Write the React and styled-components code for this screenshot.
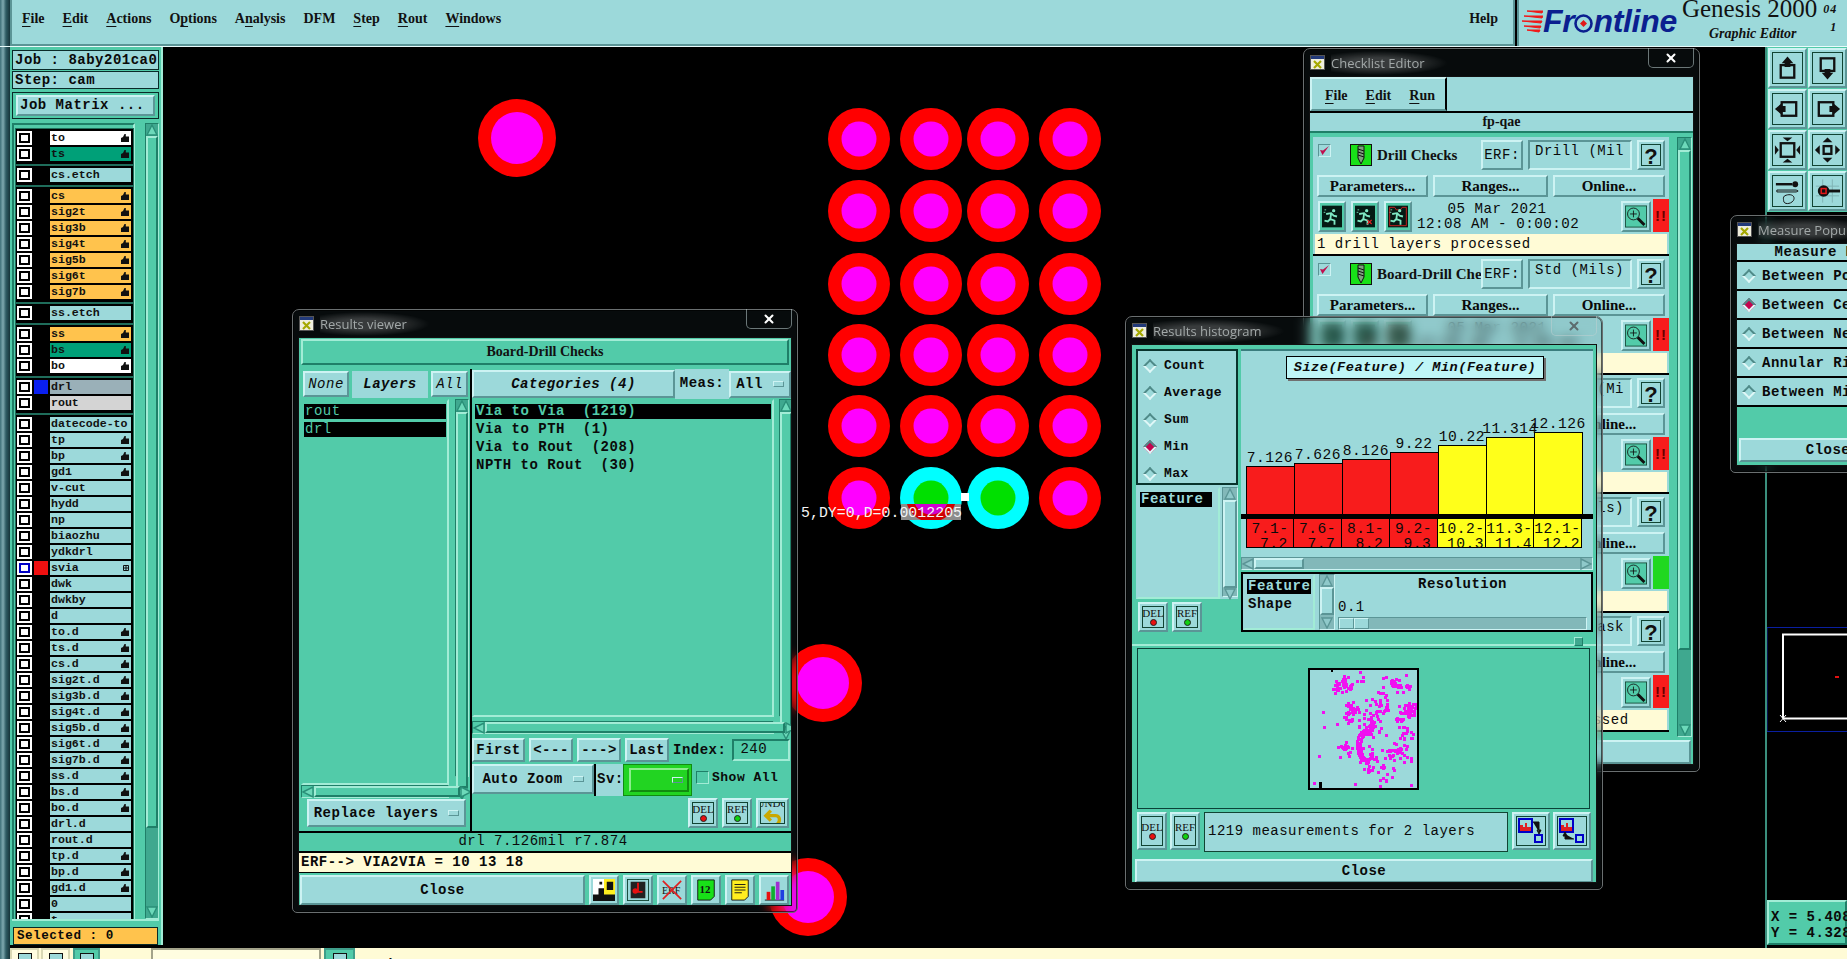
import React from "react";
import styled, { createGlobalStyle, css } from "styled-components";
import { X } from "lucide-react";

const TEAL = "#9cd9da";
const GREEN = "#52cba9";
const ORANGE = "#ffc34d";
const CREAM = "#fffbd6";
const MONO = `"Liberation Mono", "DejaVu Sans Mono", monospace`;
const SERIF = `"Liberation Serif", serif`;

const raised = css`
  border: 2px solid;
  border-color: #cdf3f3 #5b9596 #5b9596 #cdf3f3;
`;
const sunken = css`
  border: 2px solid;
  border-color: #5b9596 #cdf3f3 #cdf3f3 #5b9596;
`;
const greenRaised = css`
  border: 2px solid;
  border-color: #a2ecd6 #1f7f68 #1f7f68 #a2ecd6;
`;
const greenSunken = css`
  border: 2px solid;
  border-color: #1f7f68 #a2ecd6 #a2ecd6 #1f7f68;
`;
const monoText = css`
  font-family: ${MONO};
  font-size: 14px;
  letter-spacing: 0.5px;
  color: #0a0a0a;
`;

const GlobalStyle = createGlobalStyle`
  * { box-sizing: border-box; }
  html, body { margin: 0; padding: 0; background: #000; overflow: hidden; }
`;

const Screen = styled.div`
  position: relative;
  width: 1847px;
  height: 959px;
  overflow: hidden;
  background: #000;
  display: flex;
  flex-direction: column;
`;

/* ---------- top bar ---------- */
const TopBar = styled.div`
  height: 47px;
  display: flex;
  flex-shrink: 0;
  border-bottom: 1px solid #e8fbfb;
`;
const Rail = styled.div`
  width: 10px;
  flex-shrink: 0;
  background: linear-gradient(90deg, #3d6f78, #7fa9b0 30%, #2f5c64 60%, #17343a);
`;
const MenuPanel = styled.div`
  flex: 1;
  display: flex;
  align-items: flex-start;
  gap: 18px;
  padding: 11px 15px 0 10px;
  background: ${TEAL};
  border-bottom: 2px solid #5b9596;
  border-left: 2px solid #5b9596;
  border-right: 2px solid #5b9596;
`;
const MenuItem = styled.span`
  font: bold 14px ${SERIF};
  color: #111;
  line-height: 16px;
  margin-left: ${(p) => (p.$push ? "auto" : 0)};
  u {
    text-underline-offset: 3px;
  }
`;
const LogoPanel = styled.div`
  width: 330px;
  margin-left: 2px;
  position: relative;
  display: flex;
  background: ${TEAL};
  border-left: 2px solid #5b9596;
  overflow: hidden;
`;
const LogoMark = styled.div`
  display: flex;
  align-items: center;
  margin: 0 0 4px 2px;
  font: italic bold 32px "Liberation Sans", sans-serif;
  color: #0b1f8f;
  letter-spacing: -0.3px;
`;
const GenesisCol = styled.div`
  margin-left: 5px;
  display: flex;
  flex-direction: column;
  align-items: center;
`;
const GenesisTitle = styled.div`
  font: 25px/25px ${SERIF};
  color: #111;
  margin-top: -4px;
`;
const GenesisSub = styled.div`
  font: italic bold 14px/16px ${SERIF};
  color: #111;
  margin-top: 5px;
  margin-left: 6px;
`;
const Version = styled.div`
  margin-left: 6px;
  font: italic bold 12px/18px ${SERIF};
  color: #111;
  text-align: right;
  letter-spacing: 1px;
`;

/* ---------- middle ---------- */
const Middle = styled.div`
  flex: 1;
  display: flex;
  min-height: 0;
`;
const LeftCol = styled.div`
  width: 153px;
  height: 898px;
  flex-shrink: 0;
  background: ${GREEN};
  border-right: 2px solid #a2ecd6;
  display: flex;
  flex-direction: column;
  padding: 3px 2px 0 2px;
`;
const InfoBox = styled.div`
  border: 1px solid #0a2a28;
  background: ${TEAL};
  height: ${(p) => p.$h}px;
  padding-left: 2px;
  ${monoText};
  font-weight: bold;
  line-height: ${(p) => p.$h - 2}px;
  white-space: nowrap;
  overflow: hidden;
  margin-bottom: 1px;
`;
const MatrixFrame = styled.div`
  margin-top: 2px;
  height: 27px;
  border: 1px solid #0a2a28;
  padding: 2px 3px;
`;
const MatrixButton = styled.div`
  height: 21px;
  ${raised};
  background: ${TEAL};
  ${monoText};
  font-weight: bold;
  line-height: 17px;
  padding-left: 2px;
`;
const LayerArea = styled.div`
  margin-top: 4px;
  height: 796px;
  display: flex;
  overflow: hidden;
`;
const LayerList = styled.div`
  width: 123px;
  padding: 4px 0 0 2px;
  border: 2px solid;
  border-color: #1f7f68 #a2ecd6 transparent #1f7f68;
  border-bottom: 0;
  display: flex;
  flex-direction: column;
  gap: 2px;
`;
const LayerGroup = styled.div`
  width: 117px;
  background: #000;
  padding: 2px 0 1px 1px;
  outline: 1px solid #1f6d5b;
  flex-shrink: 0;
`;
const LayerRow = styled.div`
  display: flex;
  height: 16px;
  align-items: flex-start;
`;
const LayerCheck = styled.div`
  width: 15px;
  height: 14px;
  background: #fff;
  display: flex;
  align-items: center;
  justify-content: center;
  &::after {
    content: "";
    width: 7px;
    height: 6px;
    background: #fff;
    outline: 2px solid ${(p) => (p.$active ? "#0000c8" : "#000")};
  }
`;
const Swatch = styled.div`
  width: 14px;
  height: 14px;
  margin: 0 2px 0 2px;
  background: ${(p) => p.$color || "#000"};
`;
const LayerLabel = styled.div`
  width: 81px;
  height: 14px;
  padding: 0 1px;
  background: ${(p) => p.$bg};
  font: bold 11.6px/14px ${MONO};
  color: #111;
  display: flex;
  justify-content: space-between;
  align-items: center;
  white-space: nowrap;
  overflow: hidden;
`;
const SelectedWrap = styled.div`
  flex: 1;
  padding: 6px 1px 0;
  border-top: 2px solid #a2ecd6;
`;
const SelectedBar = styled.div`
  height: 18px;
  background: ${ORANGE};
  border: 1px solid #0a2a28;
  ${monoText};
  font-size: 12.6px;
  font-weight: bold;
  line-height: 16px;
  padding-left: 3px;
`;
const Canvas = styled.div`
  flex: 1;
  min-width: 0;
  background: #000;
`;
const Board = styled.svg`
  display: block;
  width: 100%;
  height: 100%;
`;
const RightCol = styled.div`
  width: 82px;
  flex-shrink: 0;
  border-left: 2px solid #3b8f7d;
  display: flex;
  flex-direction: column;
  background: #000;
`;
const ToolGrid = styled.div`
  height: 165px;
  background: ${GREEN};
  display: grid;
  grid-template-columns: 1fr 1fr;
  grid-auto-rows: 40px;
  gap: 1px;
  padding: 1px 0 0 1px;
`;
const ToolButton = styled.div`
  ${raised};
  background: ${TEAL};
  padding: 2px;
  svg {
    display: block;
    width: 100%;
    height: 100%;
    border: 1px solid #143;
  }
`;
const Navigator = styled.svg`
  flex: 1;
  display: block;
  width: 100%;
  min-height: 0;
`;
const XYBox = styled.div`
  height: 45px;
  margin-bottom: 3px;
  background: ${GREEN};
  ${greenRaised};
  ${monoText};
  font-weight: bold;
  line-height: 16px;
  padding: 7px 0 0 2px;
  white-space: pre;
`;

/* ---------- bottom bar ---------- */
const BottomBar = styled.div`
  height: 11px;
  display: flex;
  background: ${CREAM};
  flex-shrink: 0;
`;
const BottomBtn = styled.div`
  width: ${(p) => p.$w}px;
  margin-right: ${(p) => p.$gap || 0}px;
  background: ${(p) => (p.$green ? GREEN : "#fffde0")};
  border: 2px solid ${(p) => (p.$green ? "#3f9e8a" : "#d9d8b4")};
  border-bottom: 0;
  display: flex;
  justify-content: center;
  span {
    width: 14px;
    height: 9px;
    margin-top: 3px;
    border: 1px solid #111;
    border-bottom: 0;
    background: ${TEAL};
  }
`;
const BottomField = styled.div`
  width: 170px;
  margin-right: 3px;
  background: #fffde0;
  border: 2px solid #a3a38a;
  border-bottom: 0;
`;
const BottomStatus = styled.div`
  flex: 1;
  overflow: hidden;
  padding: 9px 0 0 22px;
  ${monoText};
  font-weight: bold;
  line-height: 16px;
  white-space: nowrap;
`;

/* ---------- windows ---------- */
const Win = styled.div`
  position: absolute;
  left: ${(p) => p.$x}px;
  top: ${(p) => p.$y}px;
  width: ${(p) => p.$w}px;
  height: ${(p) => p.$h}px;
  z-index: ${(p) => p.$z};
  border: 1px solid #6a6f70;
  border-radius: 7px 7px 5px 5px;
  background: rgba(60, 90, 95, 0.12);
  backdrop-filter: blur(6px);
  padding: 0 5px 6px;
  display: flex;
  flex-direction: column;
  box-shadow: inset 0 0 0 1px rgba(0, 0, 0, 0.6);
`;
const TitleBar = styled.div`
  position: relative;
  height: 27px;
  flex-shrink: 0;
  display: flex;
  align-items: center;
  gap: 6px;
  padding-left: 1px;
`;
const TitleText = styled.span`
  font: 13px "Open Sans", sans-serif;
  color: #a2a8a8;
  padding: 3px 22px 3px 0;
  background: radial-gradient(ellipse at 40% 50%, rgba(255, 255, 255, 0.2) 30%, rgba(255, 255, 255, 0) 72%);
  white-space: nowrap;
`;
const TitleIcon = styled.svg`
  width: 15px;
  height: 15px;
  flex-shrink: 0;
`;
const CloseTab = styled.div`
  position: absolute;
  right: 0;
  top: -1px;
  width: 46px;
  height: 20px;
  border: 1px solid rgba(190, 210, 210, 0.55);
  border-top: 0;
  border-radius: 0 0 5px 5px;
  display: flex;
  align-items: center;
  justify-content: center;
  color: ${(p) => (p.$dim ? "#5d6c6e" : "#fff")};
`;
const Body = styled.div`
  flex: 1;
  min-height: 0;
  background: ${GREEN};
  display: flex;
  flex-direction: column;
  border: 1px solid #111;
  overflow: hidden;
`;

const Btn = styled.div`
  ${raised};
  ${monoText};
  font-weight: ${(p) => (p.$thin ? "normal" : "bold")};
  font-style: ${(p) => (p.$italic ? "italic" : "normal")};
  background: ${TEAL};
  width: ${(p) => (p.$w ? `${p.$w}px` : "auto")};
  height: ${(p) => p.$h || 24}px;
  flex: ${(p) => (p.$w ? "0 0 auto" : 1)};
  display: flex;
  align-items: center;
  justify-content: center;
  gap: 10px;
  white-space: nowrap;
  overflow: hidden;
`;
const SerifBtn = styled(Btn)`
  font: bold 15px ${SERIF};
  letter-spacing: 0;
`;
const Notch = styled.i`
  display: block;
  width: 11px;
  height: 6px;
  ${raised};
  border-width: 1px;
  background: ${(p) => p.$bg || TEAL};
  flex-shrink: 0;
`;
const ListBox = styled.div`
  width: ${(p) => p.$w}px;
  height: ${(p) => p.$h}px;
  ${greenSunken};
  border-color: transparent #a2ecd6 #a2ecd6 transparent;
  padding: ${(p) => p.$pad || "3px 2px"};
  background: ${(p) => p.$bg || GREEN};
  flex-shrink: 0;
`;
const ListItem = styled.div`
  ${monoText};
  font-weight: ${(p) => (p.$bold ? "bold" : "normal")};
  height: 15px;
  line-height: 15px;
  margin-bottom: 3px;
  padding-left: 1px;
  white-space: pre;
  background: ${(p) => (p.$on ? "#000" : "transparent")};
  color: ${(p) => (p.$on ? p.$fg || GREEN : "#0a0a0a")};
  width: ${(p) => (p.$w ? `${p.$w}px` : "auto")};
`;
const NavLabel = styled.span`
  ${monoText};
  font-weight: bold;
  white-space: pre;
`;

const ScrollV = styled.div`
  width: ${(p) => p.$w || 14}px;
  height: ${(p) => p.$h}px;
  margin-left: ${(p) => p.$ml || 0}px;
  flex-shrink: 0;
  display: flex;
  flex-direction: column;
  background: ${(p) => (p.$teal ? "#82b8b9" : "#3fa88f")};
  ${(p) => (p.$teal ? sunken : greenSunken)};
  border-width: 1px;
`;
const ScrollH = styled.div`
  width: ${(p) => (p.$w ? `${p.$w}px` : "100%")};
  height: 13px;
  margin-left: ${(p) => p.$ml || 0}px;
  flex-shrink: 0;
  display: flex;
  align-items: center;
  background: ${(p) => (p.$dark ? "#82b8b9" : GREEN)};
  ${(p) => (p.$dark ? sunken : greenSunken)};
  border-width: 1px;
`;
const Thumb = styled.div`
  background: ${(p) => (p.$teal ? TEAL : GREEN)};
  ${(p) => (p.$teal ? raised : greenRaised)};
  flex: 0 0 ${(p) => p.$size};
  margin-left: ${(p) => p.$off || 0}px;
  ${(p) => p.$horizontal && "height: 11px;"}
`;
const Gap = styled.div`
  flex: 1;
`;

const Arrow = ({ dir, teal }) => {
  const pts = { up: "6,1 11,11 1,11", down: "1,1 11,1 6,11", left: "1,6 11,1 11,11", right: "1,1 11,6 1,11" }[dir];
  return (
    <svg width="12" height="12" viewBox="0 0 12 12" style={{ flexShrink: 0, display: "block", margin: "0 auto" }}>
      <polygon points={pts} fill={teal ? "#8fc9ca" : "#6dd9ba"} stroke={teal ? "#5b9596" : "#2a8f78"} strokeWidth="1.4" />
    </svg>
  );
};

const VScroll = ({ h, w, ml, thumb = "100%", teal }) => (
  <ScrollV $h={h} $w={w} $ml={ml} $teal={teal}>
    <Arrow dir="up" teal={teal} />
    <Thumb $size={thumb} $teal={teal} />
    <Gap />
    <Arrow dir="down" teal={teal} />
  </ScrollV>
);
const HScroll = ({ w, ml, thumb = "100%", dark }) => (
  <ScrollH $w={w} $ml={ml} $dark={dark}>
    <Arrow dir="left" teal={dark} />
    <Thumb $size={thumb} $teal={dark} $horizontal />
    <Gap />
    <Arrow dir="right" teal={dark} />
  </ScrollH>
);

const IconBtn = styled.div`
  ${raised};
  background: ${(p) => p.$bg || TEAL};
  width: ${(p) => p.$w || 30}px;
  height: ${(p) => p.$h || 30}px;
  flex-shrink: 0;
  padding: 2px;
  display: flex;
  svg {
    display: block;
    width: 100%;
    height: 100%;
  }
`;
const GlyphBox = styled.div`
  flex: 1;
  border: 1px solid #143;
  display: flex;
  flex-direction: column;
  align-items: center;
  justify-content: center;
  gap: 1px;
  font: 11px/10px ${SERIF};
  color: #111;
  overflow: hidden;
`;
const GlyphDot = styled.i`
  display: block;
  width: 7px;
  height: 7px;
  border-radius: 50%;
  background: ${(p) => p.$c};
  border: 1px solid #222;
`;
const DotButton = ({ label, color, h = 30 }) => (
  <IconBtn $h={h}>
    <GlyphBox>
      {label}
      <GlyphDot $c={color} />
    </GlyphBox>
  </IconBtn>
);

/* ---------- small drawings ---------- */
const WinGlyph = () => (
  <TitleIcon viewBox="0 0 15 15">
    <rect x="0.5" y="0.5" width="14" height="14" fill="#efeedd" stroke="#555" />
    <rect x="1" y="1" width="13" height="3" fill="#223a7a" />
    <path d="M4 6 L11 13 M11 6 L4 13" stroke="#a5a800" strokeWidth="2.2" />
  </TitleIcon>
);
const Hand = () => (
  <svg width="8" height="8" viewBox="0 0 8 8" style={{ marginRight: 1, flexShrink: 0 }}>
    <path d="M0 8 L0 4 L2 3 L3.5 0 L4.8 0 L4.8 2.4 L8 2.4 L8 8 Z" fill="#111" />
  </svg>
);
const GridFlag = () => (
  <svg width="6" height="6" viewBox="0 0 6 6" style={{ marginRight: 1, flexShrink: 0 }}>
    <path d="M.5 .5 H5.5 V5.5 H.5 Z M3 .5 V5.5 M.5 3 H5.5" fill="none" stroke="#111" />
  </svg>
);
const DrillIcon = () => (
  <svg width="22" height="22" viewBox="0 0 22 22" style={{ flexShrink: 0 }}>
    <rect x="0.5" y="0.5" width="21" height="21" fill="#18e018" stroke="#111" />
    <path d="M8 2 H14 V14 L11 20 L8 14 Z" fill="#7ea07e" stroke="#111" />
    <path d="M8 5 L14 7 M8 8 L14 10 M8 11 L14 13" stroke="#111" />
  </svg>
);
const RedCheck = () => (
  <svg viewBox="0 0 11 11" width="11" height="11">
    <path d="M1 5 L3.5 10 L10 1 L4 5.5 Z" fill="#c0104f" />
  </svg>
);
const Runner = ({ variant }) => (
  <svg viewBox="0 0 24 26">
    <rect width="24" height="26" fill="#041a14" />
    {variant === 2 && <path d="M2 2 H8 L10 5 H15 L17 2 H22 V24 H2 Z" fill="none" stroke="#e02020" />}
    <circle cx="14" cy="6" r="2" fill="#7fe8c4" />
    <path d="M5 10 L11 9 L14 12 L18 13 M11 9 L10 16 L15 18 L15 23 M10 16 L7 19 L3 18" fill="none" stroke="#7fe8c4" strokeWidth="2.2" />
    {variant === 1 && <path d="M15 17 L20 22 M20 17 L15 22" stroke="#e02020" strokeWidth="1.5" />}
    <path d="M3 5 H5 M2 8 H4" stroke="#7fe8c4" />
  </svg>
);
const Loupe = () => (
  <svg viewBox="0 0 26 26">
    <rect x="0.5" y="0.5" width="25" height="25" fill="#52cba9" stroke="#143" />
    <circle cx="10" cy="10" r="7" fill="none" stroke="#111" />
    <path d="M10 6 V14 M6 10 H14" stroke="#111" />
    <path d="M15 15 L23 23" stroke="#111" strokeWidth="3.5" />
  </svg>
);
const Question = styled.span`
  flex: 1;
  border: 1px solid #143;
  font: bold 22px/24px "Liberation Sans", sans-serif;
  color: #111;
  text-align: center;
`;
const ToolIcon = ({ children }) => (
  <ToolButton>
    <svg viewBox="0 0 30 30" fill="none" stroke="#111" strokeWidth="2.4">
      {children}
    </svg>
  </ToolButton>
);
const T = ({ d }) => <path d={d} fill="#111" stroke="none" />;

const CompareIcon = ({ back }) => (
  <svg viewBox="0 0 30 30">
    <rect x="0.5" y="0.5" width="29" height="29" fill="none" stroke="#143" />
    <rect x="3" y="3" width="13" height="13" fill="#9cd9da" stroke="#0000c8" strokeWidth="2" />
    <path d="M4 15 V9 H7 V11 H9 V7 H11 V11 H15 V15 Z" fill="#e02020" />
    <rect x="19" y="19" width="7" height="7" fill="none" stroke="#0000c8" strokeWidth="2" />
    {back ? (
      <path d="M17 23 H8 V18 M6 20 L8 16 L10 20 Z" fill="#111" stroke="#111" />
    ) : (
      <path d="M17 6 H23 V16 M21 14 L23 18 L25 14 Z" fill="#111" stroke="#111" />
    )}
  </svg>
);

/* ---------- data ---------- */
const rows = (bg, hand, ...names) => names.map((n) => ({ n, bg, hand }));
const layerGroups = [
  [{ n: "to", bg: "#fff", hand: true }, { n: "ts", bg: "#00a078", hand: true }],
  [{ n: "cs.etch", bg: TEAL }],
  rows(ORANGE, true, "cs", "sig2t", "sig3b", "sig4t", "sig5b", "sig6t", "sig7b"),
  [{ n: "ss.etch", bg: TEAL }],
  [{ n: "ss", bg: ORANGE, hand: true }, { n: "bs", bg: "#00a078", hand: true }, { n: "bo", bg: "#fff", hand: true }],
  [
    { n: "drl", bg: "#9ab0b8", swatch: "#0a1ff0" },
    { n: "rout", bg: "#d4d4d4" },
  ],
  [
    ...rows(TEAL, false, "datecode-to"),
    ...rows(TEAL, true, "tp", "bp", "gd1"),
    ...rows(TEAL, false, "v-cut", "hydd", "np", "biaozhu", "ydkdrl"),
    { n: "svia", bg: TEAL, grid: true, swatch: "#f01010", active: true },
    ...rows(TEAL, false, "dwk", "dwkby", "d"),
    ...rows(TEAL, true, "to.d", "ts.d", "cs.d", "sig2t.d", "sig3b.d", "sig4t.d", "sig5b.d", "sig6t.d", "sig7b.d", "ss.d", "bs.d", "bo.d"),
    ...rows(TEAL, false, "drl.d", "rout.d"),
    ...rows(TEAL, true, "tp.d", "bp.d", "gd1.d"),
    ...rows(TEAL, false, "0", "t"),
  ],
];

const bars = [
  { v: "7.126", h: 48, c: "#f81c1c", r: ["7.1-", "7.2"] },
  { v: "7.626", h: 51, c: "#f81c1c", r: ["7.6-", "7.7"] },
  { v: "8.126", h: 55, c: "#f81c1c", r: ["8.1-", "8.2"] },
  { v: "9.22", h: 62, c: "#f81c1c", r: ["9.2-", "9.3"] },
  { v: "10.22", h: 69, c: "#ffff1a", r: ["10.2-", "10.3"] },
  { v: "11.314", h: 77, c: "#ffff1a", r: ["11.3-", "11.4"] },
  { v: "12.126", h: 82, c: "#ffff1a", r: ["12.1-", "12.2"] },
];

const checks = [
  { name: "Drill Checks", input: "Drill (Mil", msg: "1 drill layers processed", status: "#f81c1c" },
  { name: "Board-Drill Checks", input: "Std (Mils)", msg: "1 drill layers processed", status: "#f81c1c" },
  { name: "Signal Checks", input: "Signal (Mi", msg: "", status: "#f81c1c" },
  { name: "Power Checks", input: "Std (Mils)", msg: "", status: "#20d820", clear: true },
  { name: "Mask Checks", input: "Paste Mask", msg: "2 solder mask layers were processed", status: "#f81c1c" },
];

const padColumns = [859, 931, 998, 1070];
const padRows = [139, 211, 284, 355, 426, 498];

const mapDots = (() => {
  let seed = 17;
  const rnd = () => {
    seed = (seed * 16807) % 2147483647;
    return seed / 2147483647;
  };
  const clusters = [
    [33, 13, 9, 40], [24, 18, 5, 8], [86, 14, 9, 24], [50, 8, 7, 6], [98, 16, 5, 6],
    [69, 32, 11, 24], [41, 38, 8, 30], [99, 38, 7, 34], [59, 54, 13, 28], [90, 50, 8, 10],
    [40, 50, 11, 14], [33, 76, 7, 14], [88, 80, 12, 26], [57, 90, 9, 12], [72, 95, 11, 10],
    [75, 108, 11, 6], [93, 62, 10, 8],
  ];
  const dots = [];
  clusters.forEach(([cx, cy, r, n]) => {
    for (let i = 0; i < n; i += 1) {
      const a = rnd() * Math.PI * 2;
      const d = rnd() * r;
      dots.push([cx + Math.cos(a) * d, cy + Math.sin(a) * d * 1.1]);
    }
  });
  for (let i = 0; i < 60; i += 1) {
    dots.push([25 + rnd() * 78, 3 + rnd() * 100]);
  }
  for (let t = 50; t < 300; t += 9) {
    const a = (t * Math.PI) / 180;
    dots.push([55 + Math.cos(a) * 9, 74 + Math.sin(a) * 15], [56 + Math.cos(a) * 7, 75 + Math.sin(a) * 13]);
  }
  [[12, 41], [13, 56], [8, 85], [3, 112], [100, 114], [44, 113], [58, 100]].forEach((p) => dots.push(p));
  return dots.map(([x, y]) => [Math.round(x), Math.round(y)]);
})();

/* ---------- results viewer parts ---------- */
const HeaderBar = styled.div`
  margin: 1px 2px 4px;
  height: 26px;
  ${greenRaised};
  flex-shrink: 0;
  font: bold 14px/22px ${SERIF};
  color: #111;
  text-align: center;
`;
const ResultsMain = styled.div`
  height: 462px;
  flex-shrink: 0;
  display: flex;
`;
const ResultsLeft = styled.div`
  width: 171px;
  display: flex;
  flex-direction: column;
  padding-left: 2px;
`;
const ResultsRight = styled.div`
  flex: 1;
  min-width: 0;
  border-left: 2px solid #000;
  display: flex;
  flex-direction: column;
`;
const TopRow = styled.div`
  display: flex;
  align-items: center;
  gap: 3px;
  height: 30px;
  flex-shrink: 0;
  padding: 0 ${(p) => (p.$flush ? 0 : 2)}px;
`;
const LayersTab = styled.div`
  flex: 1;
  height: 27px;
  background: ${TEAL};
  ${monoText};
  font-weight: bold;
  font-style: italic;
  line-height: 27px;
  text-align: center;
`;
const ListRow = styled.div`
  display: flex;
  align-items: flex-start;
  flex-shrink: 0;
  height: ${(p) => p.$h}px;
`;
const ReplaceRow = styled.div`
  flex: 1;
  padding: 1px 4px 2px 6px;
  display: flex;
`;
const MeasLabel = styled.div`
  background: ${TEAL};
  height: 30px;
  width: 54px;
  margin: 0 -3px;
  ${monoText};
  font-weight: bold;
  line-height: 28px;
  flex-shrink: 0;
  text-align: center;
`;
const NavRow = styled.div`
  display: flex;
  align-items: center;
  gap: 4px;
  height: 26px;
  margin-top: 3px;
  flex-shrink: 0;
`;
const IndexInput = styled.div`
  ${greenSunken};
  width: 58px;
  height: 22px;
  margin-left: 2px;
  ${monoText};
  line-height: 16px;
  padding-left: 6px;
`;
const ZoomRow = styled.div`
  display: flex;
  align-items: stretch;
  height: 32px;
  margin-top: 1px;
  flex-shrink: 0;
`;
const SvLabel = styled.div`
  background: ${TEAL};
  border-left: 2px solid #000;
  width: 29px;
  ${monoText};
  font-weight: bold;
  line-height: 30px;
  padding-left: 1px;
`;
const SvMenu = styled.div`
  background: #22d422;
  border: 1px solid #118c11;
  padding: 3px 2px 3px 5px;
  width: 69px;
  display: flex;
`;
const SvInner = styled.div`
  flex: 1;
  border: 2px solid;
  border-color: #8cee8c #118c11 #118c11 #8cee8c;
  background: #22d422;
  display: flex;
  align-items: center;
  justify-content: flex-end;
  padding-right: 4px;
`;
const ShowAll = styled.div`
  display: flex;
  align-items: center;
  gap: 3px;
  height: 26px;
  margin-left: 4px;
  ${monoText};
  font-size: 13px;
  font-weight: bold;
  white-space: nowrap;
  i {
    display: block;
    width: 13px;
    height: 13px;
    ${greenSunken};
    border-width: 1px;
  }
`;
const ActionRow = styled.div`
  display: flex;
  justify-content: flex-end;
  gap: 4px;
  padding: 2px 2px 0 0;
`;
const StatusLine = styled.div`
  height: 20px;
  flex-shrink: 0;
  border-top: 2px solid #000;
  ${monoText};
  line-height: 17px;
  text-align: center;
  padding-right: 4px;
`;
const ErfLine = styled.div`
  height: 22px;
  flex-shrink: 0;
  border-top: 2px solid #000;
  border-bottom: 1px solid #000;
  background: ${CREAM};
  ${monoText};
  font-weight: bold;
  line-height: 19px;
  padding-left: 2px;
  white-space: pre;
`;
const CloseRow = styled.div`
  flex: 1;
  display: flex;
  gap: 4px;
  padding: 2px 2px 2px 1px;
`;

/* ---------- histogram parts ---------- */
const HistTop = styled.div`
  display: flex;
  gap: 3px;
  height: 294px;
  padding: 4px 3px 0 4px;
  flex-shrink: 0;
`;
const HistSide = styled.div`
  width: 102px;
  flex-shrink: 0;
  display: flex;
  flex-direction: column;
`;
const RadioPanel = styled.div`
  height: 136px;
  background: ${TEAL};
  border: 2px solid #08332c;
  padding: 1px 0 0 5px;
  flex-shrink: 0;
`;
const RadioRow = styled.div`
  height: ${(p) => p.$h || 27}px;
  display: flex;
  align-items: center;
  gap: ${(p) => p.$gap || 9}px;
  ${monoText};
  font-weight: bold;
  font-size: ${(p) => p.$size || 13}px;
  white-space: nowrap;
`;
const Diamond = styled.i`
  display: block;
  flex-shrink: 0;
  width: 10px;
  height: 10px;
  margin-left: 2px;
  transform: rotate(45deg);
  background: ${(p) => (p.$on ? "#c4044f" : TEAL)};
  border: 2px solid;
  border-color: #4f8a88 #dff7f7 #dff7f7 #4f8a88;
`;
const SideList = styled.div`
  height: 114px;
  background: ${TEAL};
  display: flex;
  padding-top: 2px;
  flex-shrink: 0;
`;
const SideButtons = styled.div`
  display: flex;
  gap: 4px;
  padding: 3px 0 0 2px;
`;
const ChartCol = styled.div`
  flex: 1;
  min-width: 0;
  display: flex;
  flex-direction: column;
`;
const ChartPanel = styled.div`
  height: 208px;
  background: ${TEAL};
  border-top: 2px solid #3a7d7d;
  padding: 5px 0 0;
  flex-shrink: 0;
`;
const ChartTitle = styled.div`
  width: 258px;
  height: 23px;
  margin-left: 45px;
  background: #bff6f7;
  border: 1px solid #000;
  box-shadow: 2px 2px 0 #707070;
  ${monoText};
  font-size: 13.6px;
  font-weight: bold;
  font-style: italic;
  line-height: 21px;
  text-align: center;
  white-space: nowrap;
`;
const BarArea = styled.div`
  height: 135px;
  display: flex;
  align-items: flex-end;
  padding-left: 5px;
`;
const BarCol = styled.div`
  width: 48px;
  display: flex;
  flex-direction: column;
  align-items: center;
`;
const BarValue = styled.div`
  ${monoText};
  font-size: 14.6px;
  line-height: 17px;
  white-space: nowrap;
  margin-bottom: -1px;
`;
const Bar = styled.div`
  width: 49px;
  height: ${(p) => p.$h}px;
  background: ${(p) => p.$c};
  border: 1px solid #000;
  border-bottom: 0;
`;
const BarBand = styled.div`
  height: 5px;
  background: #000;
`;
const RangeRow = styled.div`
  display: flex;
  height: 29px;
  padding-left: 5px;
`;
const RangeCell = styled.div`
  width: 48px;
  background: ${(p) => p.$c};
  border: 1px solid #000;
  border-left-width: ${(p) => (p.$first ? 1 : 0)}px;
  border-top: 0;
  overflow: hidden;
  padding-top: 3px;
  ${monoText};
  font-size: 14.6px;
  line-height: 15px;
  white-space: nowrap;
  text-align: center;
  div + div {
    padding-left: 8px;
  }
`;
const ChartBottom = styled.div`
  height: 60px;
  margin-top: 2px;
  display: flex;
  border: 2px solid #000;
  background: ${TEAL};
`;
const ResolutionPanel = styled.div`
  flex: 1;
  min-width: 0;
  display: flex;
  flex-direction: column;
  padding: 0 4px 0 3px;
  ${monoText};
`;
const ResolutionHead = styled.div`
  font-weight: bold;
  font-size: 14px;
  line-height: 20px;
  text-align: center;
`;
const Slider = styled.div`
  height: 13px;
  margin-top: 2px;
  ${sunken};
  border-width: 1px;
  background: #82b8b9;
  display: flex;
`;
const SliderGrip = styled.div`
  width: 15px;
  ${raised};
  border-width: 1px;
  background: ${TEAL};
`;
const Sash = styled.div`
  position: relative;
  height: 7px;
  flex-shrink: 0;
  border-bottom: 2px solid #a2ecd6;
  i {
    position: absolute;
    right: 13px;
    top: -2px;
    width: 9px;
    height: 9px;
    background: #3fa88f;
    ${greenRaised};
    border-width: 1px;
  }
`;
const MapPanel = styled.div`
  height: 161px;
  margin: 2px 6px 0 5px;
  flex-shrink: 0;
  border: 1px solid #0b4238;
  background: ${GREEN};
  display: flex;
  align-items: center;
  justify-content: center;
`;
const MapBox = styled.svg`
  display: block;
  width: 111px;
  height: 122px;
  background: ${TEAL};
  border: 2px solid #000;
`;
const MeasureRow = styled.div`
  display: flex;
  align-items: flex-start;
  height: 44px;
  margin-top: 3px;
  padding: 0 5px;
  gap: 3px;
  flex-shrink: 0;
`;
const MeasureText = styled.div`
  flex: 1;
  height: 40px;
  background: ${TEAL};
  border: 1px solid #143;
  ${monoText};
  line-height: 36px;
  padding-left: 3px;
  white-space: pre;
  margin: 0 1px;
`;
const HistClose = styled.div`
  padding: 3px 3px 0 3px;
`;

/* ---------- checklist parts ---------- */
const MenuStrip = styled.div`
  display: flex;
  flex-shrink: 0;
  height: 36px;
  border-bottom: 2px solid #000;
  background: ${TEAL};
`;
const MenuBlock = styled.div`
  width: 137px;
  ${raised};
  border-right: 2px solid #000;
  display: flex;
  gap: 18px;
  padding: 9px 0 0 13px;
`;
const FpBar = styled.div`
  height: 20px;
  background: ${TEAL};
  flex-shrink: 0;
  border-bottom: 2px solid #1f7f68;
  font: bold 14px/18px ${SERIF};
  color: #111;
  text-align: center;
`;
const CheckArea = styled.div`
  height: 604px;
  display: flex;
  padding: 4px 0 0 3px;
  flex-shrink: 0;
`;
const CheckList = styled.div`
  width: 356px;
  overflow: hidden;
  flex-shrink: 0;
`;
const CheckRow = styled.div`
  height: 119px;
  background: ${TEAL};
  border-bottom: 2px solid #000;
  display: flex;
  flex-direction: column;
`;
const RowTop = styled.div`
  height: 36px;
  display: flex;
  align-items: center;
  padding-left: 5px;
  flex-shrink: 0;
`;
const CheckBox = styled.div`
  width: 13px;
  height: 13px;
  ${sunken};
  border-width: 1px;
  margin-right: 19px;
  margin-top: -10px;
  display: flex;
  align-items: center;
  justify-content: center;
  flex-shrink: 0;
`;
const CheckName = styled.div`
  width: 104px;
  margin-left: 5px;
  font: bold 15px ${SERIF};
  color: #111;
  white-space: nowrap;
  overflow: hidden;
  flex-shrink: 0;
`;
const ErfInput = styled.div`
  width: 104px;
  height: 30px;
  margin: 0 5px;
  ${sunken};
  ${monoText};
  line-height: 18px;
  padding-left: 5px;
  white-space: nowrap;
  overflow: hidden;
  flex-shrink: 0;
`;
const ParamRow = styled.div`
  height: 26px;
  display: flex;
  gap: 5px;
  padding: 2px 0 0 4px;
  flex-shrink: 0;
`;
const StatusRow = styled.div`
  height: 33px;
  display: flex;
  padding: 2px 0 0 5px;
  gap: 5px;
  flex-shrink: 0;
`;
const RunTimes = styled.div`
  width: 160px;
  ${monoText};
  font-size: 14.2px;
  line-height: 15px;
  text-align: center;
  white-space: nowrap;
  padding-top: 1px;
`;
const StatusFlag = styled.div`
  width: 16px;
  margin: -2px 0 0 -3px;
  background: ${(p) => p.$c};
  font: bold 15px/33px "Liberation Sans", sans-serif;
  color: #6b0000;
  text-align: center;
  letter-spacing: 1px;
`;
const MsgLine = styled.div`
  height: 20px;
  margin: 2px 2px 0 2px;
  background: ${CREAM};
  ${monoText};
  line-height: 20px;
  padding-left: 2px;
  white-space: pre;
  flex-shrink: 0;
`;
const WideClose = styled.div`
  padding: 3px 2px;
  display: flex;
  flex-shrink: 0;
`;

const MeasureHead = styled.div`
  height: 18px;
  background: ${TEAL};
  border-bottom: 2px solid #000;
  ${monoText};
  font-weight: bold;
  line-height: 16px;
  text-align: center;
  flex-shrink: 0;
`;
const MeasureItem = styled.div`
  height: 29px;
  background: ${TEAL};
  border-bottom: 2px solid #000;
  padding-left: 5px;
  flex-shrink: 0;
`;

const App = () => (
  <Screen>
    <GlobalStyle />
    <TopBar>
      <Rail />
      <MenuPanel>
        <MenuItem><u>F</u>ile</MenuItem>
        <MenuItem><u>E</u>dit</MenuItem>
        <MenuItem><u>A</u>ctions</MenuItem>
        <MenuItem>O<u>p</u>tions</MenuItem>
        <MenuItem>A<u>n</u>alysis</MenuItem>
        <MenuItem>DFM</MenuItem>
        <MenuItem><u>S</u>tep</MenuItem>
        <MenuItem><u>R</u>out</MenuItem>
        <MenuItem><u>W</u>indows</MenuItem>
        <MenuItem $push>Help</MenuItem>
      </MenuPanel>
      <LogoPanel>
        <LogoMark>
          <svg width="22" height="24" viewBox="0 0 22 24" style={{ flexShrink: 0 }}>
            <path d="M22 2 H6 L21 4 Z M22 7 H3 L21 9 Z M21 12 H1 L20 14 Z M20 17 H3 L19 19 Z M19 21 H6 L18 23 Z" fill="#f01818" stroke="#f01818" />
          </svg>
          Fr
          <svg width="19" height="19" viewBox="0 0 19 19" style={{ flexShrink: 0, marginTop: 5 }}>
            <circle cx="9.5" cy="9.5" r="8" fill="none" stroke="#0b1f8f" strokeWidth="2.6" />
            <path d="M9.5 6 L13 9.5 L9.5 13 L6 9.5 Z" fill="#e01818" />
          </svg>
          ntline
        </LogoMark>
        <GenesisCol>
          <GenesisTitle>Genesis 2000</GenesisTitle>
          <GenesisSub>Graphic Editor</GenesisSub>
        </GenesisCol>
        <Version>
          04
          <br />1
        </Version>
      </LogoPanel>
    </TopBar>

    <Middle>
      <Rail />
      <LeftCol>
        <InfoBox $h={20}>Job : 8aby201ca0</InfoBox>
        <InfoBox $h={18}>Step: cam</InfoBox>
        <MatrixFrame>
          <MatrixButton>Job Matrix ...</MatrixButton>
        </MatrixFrame>
        <LayerArea>
          <LayerList>
            {layerGroups.map((group, g) => (
              <LayerGroup key={g}>
                {group.map((row) => (
                  <LayerRow key={row.n}>
                    <LayerCheck $active={row.active} />
                    <Swatch $color={row.swatch} />
                    <LayerLabel $bg={row.bg}>
                      {row.n}
                      {row.hand && <Hand />}
                      {row.grid && <GridFlag />}
                    </LayerLabel>
                  </LayerRow>
                ))}
              </LayerGroup>
            ))}
          </LayerList>
          <VScroll h={796} w={14} ml={10} thumb="692px" />
        </LayerArea>
        <SelectedWrap>
          <SelectedBar>Selected : 0</SelectedBar>
        </SelectedWrap>
      </LeftCol>

      <Canvas>
        <Board viewBox="163 47 1602 901">
          <circle cx="517" cy="138" r="39" fill="#ff0000" />
          <circle cx="517" cy="138" r="26" fill="#ff00ff" />
          <circle cx="823" cy="683" r="39" fill="#ff0000" />
          <circle cx="823" cy="683" r="26" fill="#ff00ff" />
          <circle cx="808" cy="897" r="39" fill="#ff0000" />
          <circle cx="808" cy="897" r="26" fill="#ff00ff" />
          {padRows.map((y, r) =>
            padColumns.map((x, c) => {
              const via = r === 5 && (c === 1 || c === 2);
              return (
                <g key={`${x}-${y}`}>
                  <circle cx={x} cy={y} r="31" fill={via ? "#00ffff" : "#ff0000"} />
                  <circle cx={x} cy={y} r="17.5" fill={via ? "#00e000" : "#ff00ff"} />
                </g>
              );
            })
          )}
          <rect x="961" y="493" width="8" height="8" fill="#fff" />
          <clipPath id="band">
            <rect x="901" y="504" width="60" height="16" />
          </clipPath>
          <rect x="901" y="504" width="60" height="16" fill="#8c8c8c" />
          <g clipPath="url(#band)">
            <circle cx="931" cy="497" r="25" fill="#d00000" />
            <circle cx="931" cy="497" r="17.5" fill="#d000d0" />
          </g>
          <text x="801" y="517" fill="#f4f4f4" fontFamily={MONO} fontSize="14.8" textLength="161">
            5,DY=0,D=0.0012205
          </text>
        </Board>
      </Canvas>

      <RightCol>
        <ToolGrid>
          <ToolIcon><rect x="8" y="12" width="14" height="13" /><T d="M15 3 L21 10 H18 V14 H12 V10 H9 Z" /></ToolIcon>
          <ToolIcon><rect x="8" y="5" width="14" height="13" /><T d="M15 27 L21 20 H18 V16 H12 V20 H9 Z" /></ToolIcon>
          <ToolIcon><rect x="9" y="8" width="15" height="14" /><T d="M2 15 L9 9 V12 H13 V18 H9 V21 Z" /></ToolIcon>
          <ToolIcon><rect x="6" y="8" width="15" height="14" /><T d="M28 15 L21 9 V12 H17 V18 H21 V21 Z" /></ToolIcon>
          <ToolIcon><rect x="8" y="8" width="14" height="14" /><T d="M15 6 L10 2 H20 Z M15 24 L10 28 H20 Z M6 15 L2 10 V20 Z M24 15 L28 10 V20 Z" /></ToolIcon>
          <ToolIcon><rect x="11" y="11" width="8" height="8" /><T d="M15 2 L20 7 H10 Z M15 28 L20 23 H10 Z M2 15 L7 10 V20 Z M28 15 L23 10 V20 Z" /></ToolIcon>
          <ToolIcon>
            <path d="M3 8 H20" strokeWidth="2.5" />
            <circle cx="23" cy="8" r="3" fill="#111" stroke="none" />
            <path d="M4 14 H24 L26 15 L24 16 H4 Z" strokeWidth="1" />
            <path d="M12 20 C18 17 24 20 21 25 C18 29 11 29 11 25 C11 23 10 22 12 20 Z" strokeWidth="1" />
          </ToolIcon>
          <ToolIcon>
            <path d="M10 3 V27 M20 3 V27 M3 10 H27 M3 20 H27" stroke="#7fb3b4" strokeWidth="1" />
            <path d="M14 15 H28" strokeWidth="3" />
            <circle cx="11" cy="15" r="6" fill="#111" stroke="none" />
            <rect x="8.5" y="12.5" width="5" height="5" fill="none" stroke="#e01818" strokeWidth="1.6" />
          </ToolIcon>
        </ToolGrid>
        <Navigator viewBox="1767 212 80 688" preserveAspectRatio="xMinYMin slice">
          <rect x="1767" y="627.5" width="90" height="104" fill="none" stroke="#0a1fa0" />
          <path d="M1783 718.5 V634.5 H1847 M1783 718.5 H1847" fill="none" stroke="#fff" strokeWidth="2" />
          <path d="M1780 715 L1786 722 M1786 715 L1780 722" stroke="#fff" />
          <rect x="1835" y="676" width="4" height="2" fill="#e01010" />
        </Navigator>
        <XYBox>{"X = 5.408\nY = 4.328"}</XYBox>
      </RightCol>
    </Middle>

    <BottomBar>
      <Rail />
      <BottomBtn $w={29} $gap={2}><span /></BottomBtn>
      <BottomBtn $w={29} $gap={3}><span /></BottomBtn>
      <BottomBtn $w={27} $gap={51} $green><span /></BottomBtn>
      <BottomField />
      <BottomBtn $w={31} $green><span /></BottomBtn>
      <BottomStatus>Distance : DX=0.0012205,DY=0,D=0.0012205</BottomStatus>
    </BottomBar>

    <Win $x={1303} $y={48} $w={397} $h={724} $z={1}>
      <TitleBar>
        <WinGlyph />
        <TitleText>Checklist Editor</TitleText>
        <CloseTab><X size={14} strokeWidth={3.5} /></CloseTab>
      </TitleBar>
      <Body>
        <MenuStrip>
          <MenuBlock>
            <MenuItem><u>F</u>ile</MenuItem>
            <MenuItem><u>E</u>dit</MenuItem>
            <MenuItem><u>R</u>un</MenuItem>
          </MenuBlock>
        </MenuStrip>
        <FpBar>fp-qae</FpBar>
        <CheckArea>
          <CheckList>
            {checks.map((c) => (
              <CheckRow key={c.name}>
                <RowTop>
                  <CheckBox><RedCheck /></CheckBox>
                  <DrillIcon />
                  <CheckName>{c.name}</CheckName>
                  <Btn $w={42} $h={30} $thin>ERF:</Btn>
                  <ErfInput>{c.input}</ErfInput>
                  <IconBtn $w={28} $h={30}><Question>?</Question></IconBtn>
                </RowTop>
                <ParamRow>
                  <SerifBtn $w={111} $h={22}>Parameters...</SerifBtn>
                  <SerifBtn $w={115} $h={22}>Ranges...</SerifBtn>
                  <SerifBtn $w={112} $h={22}>Online...</SerifBtn>
                </ParamRow>
                <StatusRow>
                  <IconBtn $w={28} $h={31} $bg="#52cba9"><Runner /></IconBtn>
                  <IconBtn $w={28} $h={31} $bg="#52cba9"><Runner variant={1} /></IconBtn>
                  <IconBtn $w={28} $h={31} $bg="#52cba9"><Runner variant={2} /></IconBtn>
                  <RunTimes>
                    05 Mar 2021
                    <br />
                    12:08 AM - 0:00:02
                  </RunTimes>
                  <Gap />
                  <IconBtn $w={30} $h={31}><Loupe /></IconBtn>
                  <StatusFlag $c={c.status}>{c.clear ? "" : "!!"}</StatusFlag>
                </StatusRow>
                <MsgLine>{c.msg}</MsgLine>
              </CheckRow>
            ))}
          </CheckList>
          <VScroll h={600} w={15} ml={8} thumb="500px" />
        </CheckArea>
        <WideClose>
          <Btn $h={24}>Close</Btn>
        </WideClose>
      </Body>
    </Win>

    <Win $x={1730} $y={215} $w={196} $h={258} $z={1}>
      <TitleBar>
        <WinGlyph />
        <TitleText>Measure Popup</TitleText>
      </TitleBar>
      <Body>
        <MeasureHead>Measure Mode</MeasureHead>
        <MeasureItem><RadioRow $gap={8} $size={14}><Diamond />Between Points</RadioRow></MeasureItem>
        <MeasureItem><RadioRow $gap={8} $size={14}><Diamond $on />Between Centers</RadioRow></MeasureItem>
        <MeasureItem><RadioRow $gap={8} $size={14}><Diamond />Between Nets</RadioRow></MeasureItem>
        <MeasureItem><RadioRow $gap={8} $size={14}><Diamond />Annular Ring</RadioRow></MeasureItem>
        <MeasureItem><RadioRow $gap={8} $size={14}><Diamond />Between Mid</RadioRow></MeasureItem>
        <Gap />
        <WideClose>
          <Btn $h={24}>Close</Btn>
        </WideClose>
      </Body>
    </Win>

    <Win $x={292} $y={309} $w={506} $h={604} $z={3}>
      <TitleBar>
        <WinGlyph />
        <TitleText>Results viewer</TitleText>
        <CloseTab><X size={14} strokeWidth={3.5} /></CloseTab>
      </TitleBar>
      <Body>
        <HeaderBar>Board-Drill Checks</HeaderBar>
        <ResultsMain>
          <ResultsLeft>
            <TopRow>
              <Btn $w={46} $h={26} $italic $thin>None</Btn>
              <LayersTab>Layers</LayersTab>
              <Btn $w={37} $h={26} $italic $thin>All</Btn>
            </TopRow>
            <ListRow $h={386}>
              <ListBox $w={148} $h={386} $pad="3px 1px">
                <ListItem $on $w={142}>rout</ListItem>
                <ListItem $on $w={142}>drl</ListItem>
              </ListBox>
              <VScroll h={378} w={14} ml={6} />
            </ListRow>
            <HScroll w={148} />
            <ReplaceRow>
              <Btn $h={28}>Replace layers<Notch /></Btn>
            </ReplaceRow>
          </ResultsLeft>
          <ResultsRight>
            <TopRow $flush>
              <Btn $w={203} $h={28} $italic>Categories (4)</Btn>
              <MeasLabel>Meas:</MeasLabel>
              <Btn $w={62} $h={27}>All<Notch /></Btn>
            </TopRow>
            <ListRow $h={322}>
              <ListBox $w={302} $h={318} $pad="3px 1px">
                <ListItem $on $bold>{"Via to Via  (1219)"}</ListItem>
                <ListItem $bold>{"Via to PTH  (1)"}</ListItem>
                <ListItem $bold>{"Via to Rout  (208)"}</ListItem>
                <ListItem $bold>{"NPTH to Rout  (30)"}</ListItem>
              </ListBox>
              <VScroll h={318} w={14} ml={5} />
            </ListRow>
            <HScroll w={302} />
            <NavRow>
              <Btn $w={53} $h={24}>First</Btn>
              <Btn $w={44} $h={24}>&lt;---</Btn>
              <Btn $w={44} $h={24}>---&gt;</Btn>
              <Btn $w={44} $h={24}>Last</Btn>
              <NavLabel>Index:</NavLabel>
              <IndexInput>240</IndexInput>
            </NavRow>
            <ZoomRow>
              <Btn $w={122} $h={30}>Auto Zoom<Notch /></Btn>
              <SvLabel>Sv:</SvLabel>
              <SvMenu>
                <SvInner><Notch $bg="#22d422" /></SvInner>
              </SvMenu>
              <ShowAll><i />Show All</ShowAll>
            </ZoomRow>
            <ActionRow>
              <DotButton label="DEL" color="#e81010" />
              <DotButton label="REF" color="#10d010" />
              <IconBtn $w={33}>
                <GlyphBox>
                  UNDO
                  <svg viewBox="0 0 12 12" width="12" height="12" style={{ flex: "none" }}>
                    <path d="M3 4 H8 C11 4 11 9 7 10 M5 1 L2 4 L5 7" fill="none" stroke="#c9a800" strokeWidth="2" />
                  </svg>
                </GlyphBox>
              </IconBtn>
            </ActionRow>
          </ResultsRight>
        </ResultsMain>
        <StatusLine>{"drl 7.126mil  r7.874"}</StatusLine>
        <ErfLine>{"ERF--> VIA2VIA = 10 13 18"}</ErfLine>
        <CloseRow>
          <Btn $h={30}>Close</Btn>
          <IconBtn>
            <svg viewBox="0 0 24 24">
              <rect width="12" height="24" fill="#fff" />
              <rect x="12" width="12" height="24" fill="#ffee20" />
              <path d="M0 17 H24 V24 H0 Z M6 10 H12 V17 H6 Z M7 3 H10 V6 H7 Z M15 3 H22 V12 H15 Z" fill="#111" />
            </svg>
          </IconBtn>
          <IconBtn>
            <svg viewBox="0 0 24 24">
              <rect x="0.5" y="0.5" width="23" height="23" fill="none" stroke="#143" />
              <rect x="4" y="3" width="16" height="18" fill="#222" />
              <path d="M7 14 H17 M12 4 V14" stroke="#e81010" strokeWidth="2" />
              <circle cx="9" cy="13" r="3" fill="#e81010" />
            </svg>
          </IconBtn>
          <IconBtn>
            <svg viewBox="0 0 24 24">
              <text x="1" y="16" fontFamily={SERIF} fontSize="11" fill="#111">ERF</text>
              <path d="M2 2 L22 22 M22 2 L2 22" stroke="#e02020" strokeWidth="1.8" />
            </svg>
          </IconBtn>
          <IconBtn>
            <svg viewBox="0 0 24 24">
              <path d="M3 1 H21 V19 L17 23 H3 Z" fill="#18e018" stroke="#111" />
              <text x="5" y="15" fontFamily={SERIF} fontWeight="bold" fontSize="12" fill="#111">12</text>
            </svg>
          </IconBtn>
          <IconBtn>
            <svg viewBox="0 0 24 24">
              <path d="M3 1 H21 V19 L17 23 H3 Z" fill="#ffee20" stroke="#111" />
              <path d="M6 6 H18 M6 9 H18 M6 12 H18 M6 15 H14" stroke="#111" />
            </svg>
          </IconBtn>
          <IconBtn>
            <svg viewBox="0 0 24 24">
              <path d="M2 23 H23" stroke="#111" />
              <rect x="4" y="14" width="4" height="9" fill="#e81010" />
              <rect x="9" y="8" width="4" height="15" fill="#10b030" />
              <rect x="14" y="3" width="4" height="20" fill="#a030d0" />
              <rect x="19" y="12" width="4" height="11" fill="#2040e0" />
            </svg>
          </IconBtn>
        </CloseRow>
      </Body>
    </Win>

    <Win $x={1125} $y={316} $w={478} $h={574} $z={2}>
      <TitleBar>
        <WinGlyph />
        <TitleText>Results histogram</TitleText>
        <CloseTab $dim><X size={14} strokeWidth={3.5} /></CloseTab>
      </TitleBar>
      <Body>
        <HistTop>
          <HistSide>
            <RadioPanel>
              <RadioRow><Diamond />Count</RadioRow>
              <RadioRow><Diamond />Average</RadioRow>
              <RadioRow><Diamond />Sum</RadioRow>
              <RadioRow><Diamond $on />Min</RadioRow>
              <RadioRow><Diamond />Max</RadioRow>
            </RadioPanel>
            <SideList>
              <ListBox $w={84} $h={112} $pad="3px 2px" $bg={TEAL}>
                <ListItem $on $bold $fg={TEAL} $w={72}>Feature</ListItem>
              </ListBox>
              <VScroll h={110} w={16} ml={2} teal thumb="88px" />
            </SideList>
            <SideButtons>
              <DotButton label="DEL" color="#e81010" />
              <DotButton label="REF" color="#10d010" />
            </SideButtons>
          </HistSide>
          <ChartCol>
            <ChartPanel>
              <ChartTitle>Size(Feature) / Min(Feature)</ChartTitle>
              <BarArea>
                {bars.map((b) => (
                  <BarCol key={b.v}>
                    <BarValue>{b.v}</BarValue>
                    <Bar $h={b.h} $c={b.c} />
                  </BarCol>
                ))}
              </BarArea>
              <BarBand />
              <RangeRow>
                {bars.map((b, i) => (
                  <RangeCell key={b.v} $c={b.c} $first={i === 0}>
                    <div>{b.r[0]}</div>
                    <div>{b.r[1]}</div>
                  </RangeCell>
                ))}
              </RangeRow>
            </ChartPanel>
            <HScroll dark thumb="50px" />
            <ChartBottom>
              <ListBox $w={72} $h={56} $pad="3px 2px" $bg={TEAL}>
                <ListItem $on $bold $fg={TEAL} $w={64}>Feature</ListItem>
                <ListItem $bold>Shape</ListItem>
              </ListBox>
              <VScroll h={56} w={16} ml={4} teal thumb="28px" />
              <ResolutionPanel>
                <ResolutionHead>Resolution</ResolutionHead>
                <Gap />
                0.1
                <Slider>
                  <SliderGrip />
                  <SliderGrip />
                </Slider>
              </ResolutionPanel>
            </ChartBottom>
          </ChartCol>
        </HistTop>
        <Sash><i /></Sash>
        <MapPanel>
          <MapBox viewBox="0 0 107 118">
            {mapDots.map(([x, y], i) => (
              <rect key={i} x={x} y={y} width="3" height="3" fill="#f010f0" />
            ))}
            <rect x="21" y="0" width="2" height="2" fill="#000" />
            <rect x="9" y="112" width="3" height="6" fill="#000" />
          </MapBox>
        </MapPanel>
        <MeasureRow>
          <DotButton label="DEL" color="#e81010" h={38} />
          <DotButton label="REF" color="#10d010" h={38} />
          <MeasureText>1219 measurements for 2 layers</MeasureText>
          <IconBtn $w={38} $h={38}><CompareIcon /></IconBtn>
          <IconBtn $w={38} $h={38}><CompareIcon back /></IconBtn>
        </MeasureRow>
        <HistClose>
          <Btn $h={24}>Close</Btn>
        </HistClose>
      </Body>
    </Win>
  </Screen>
);

export default App;
